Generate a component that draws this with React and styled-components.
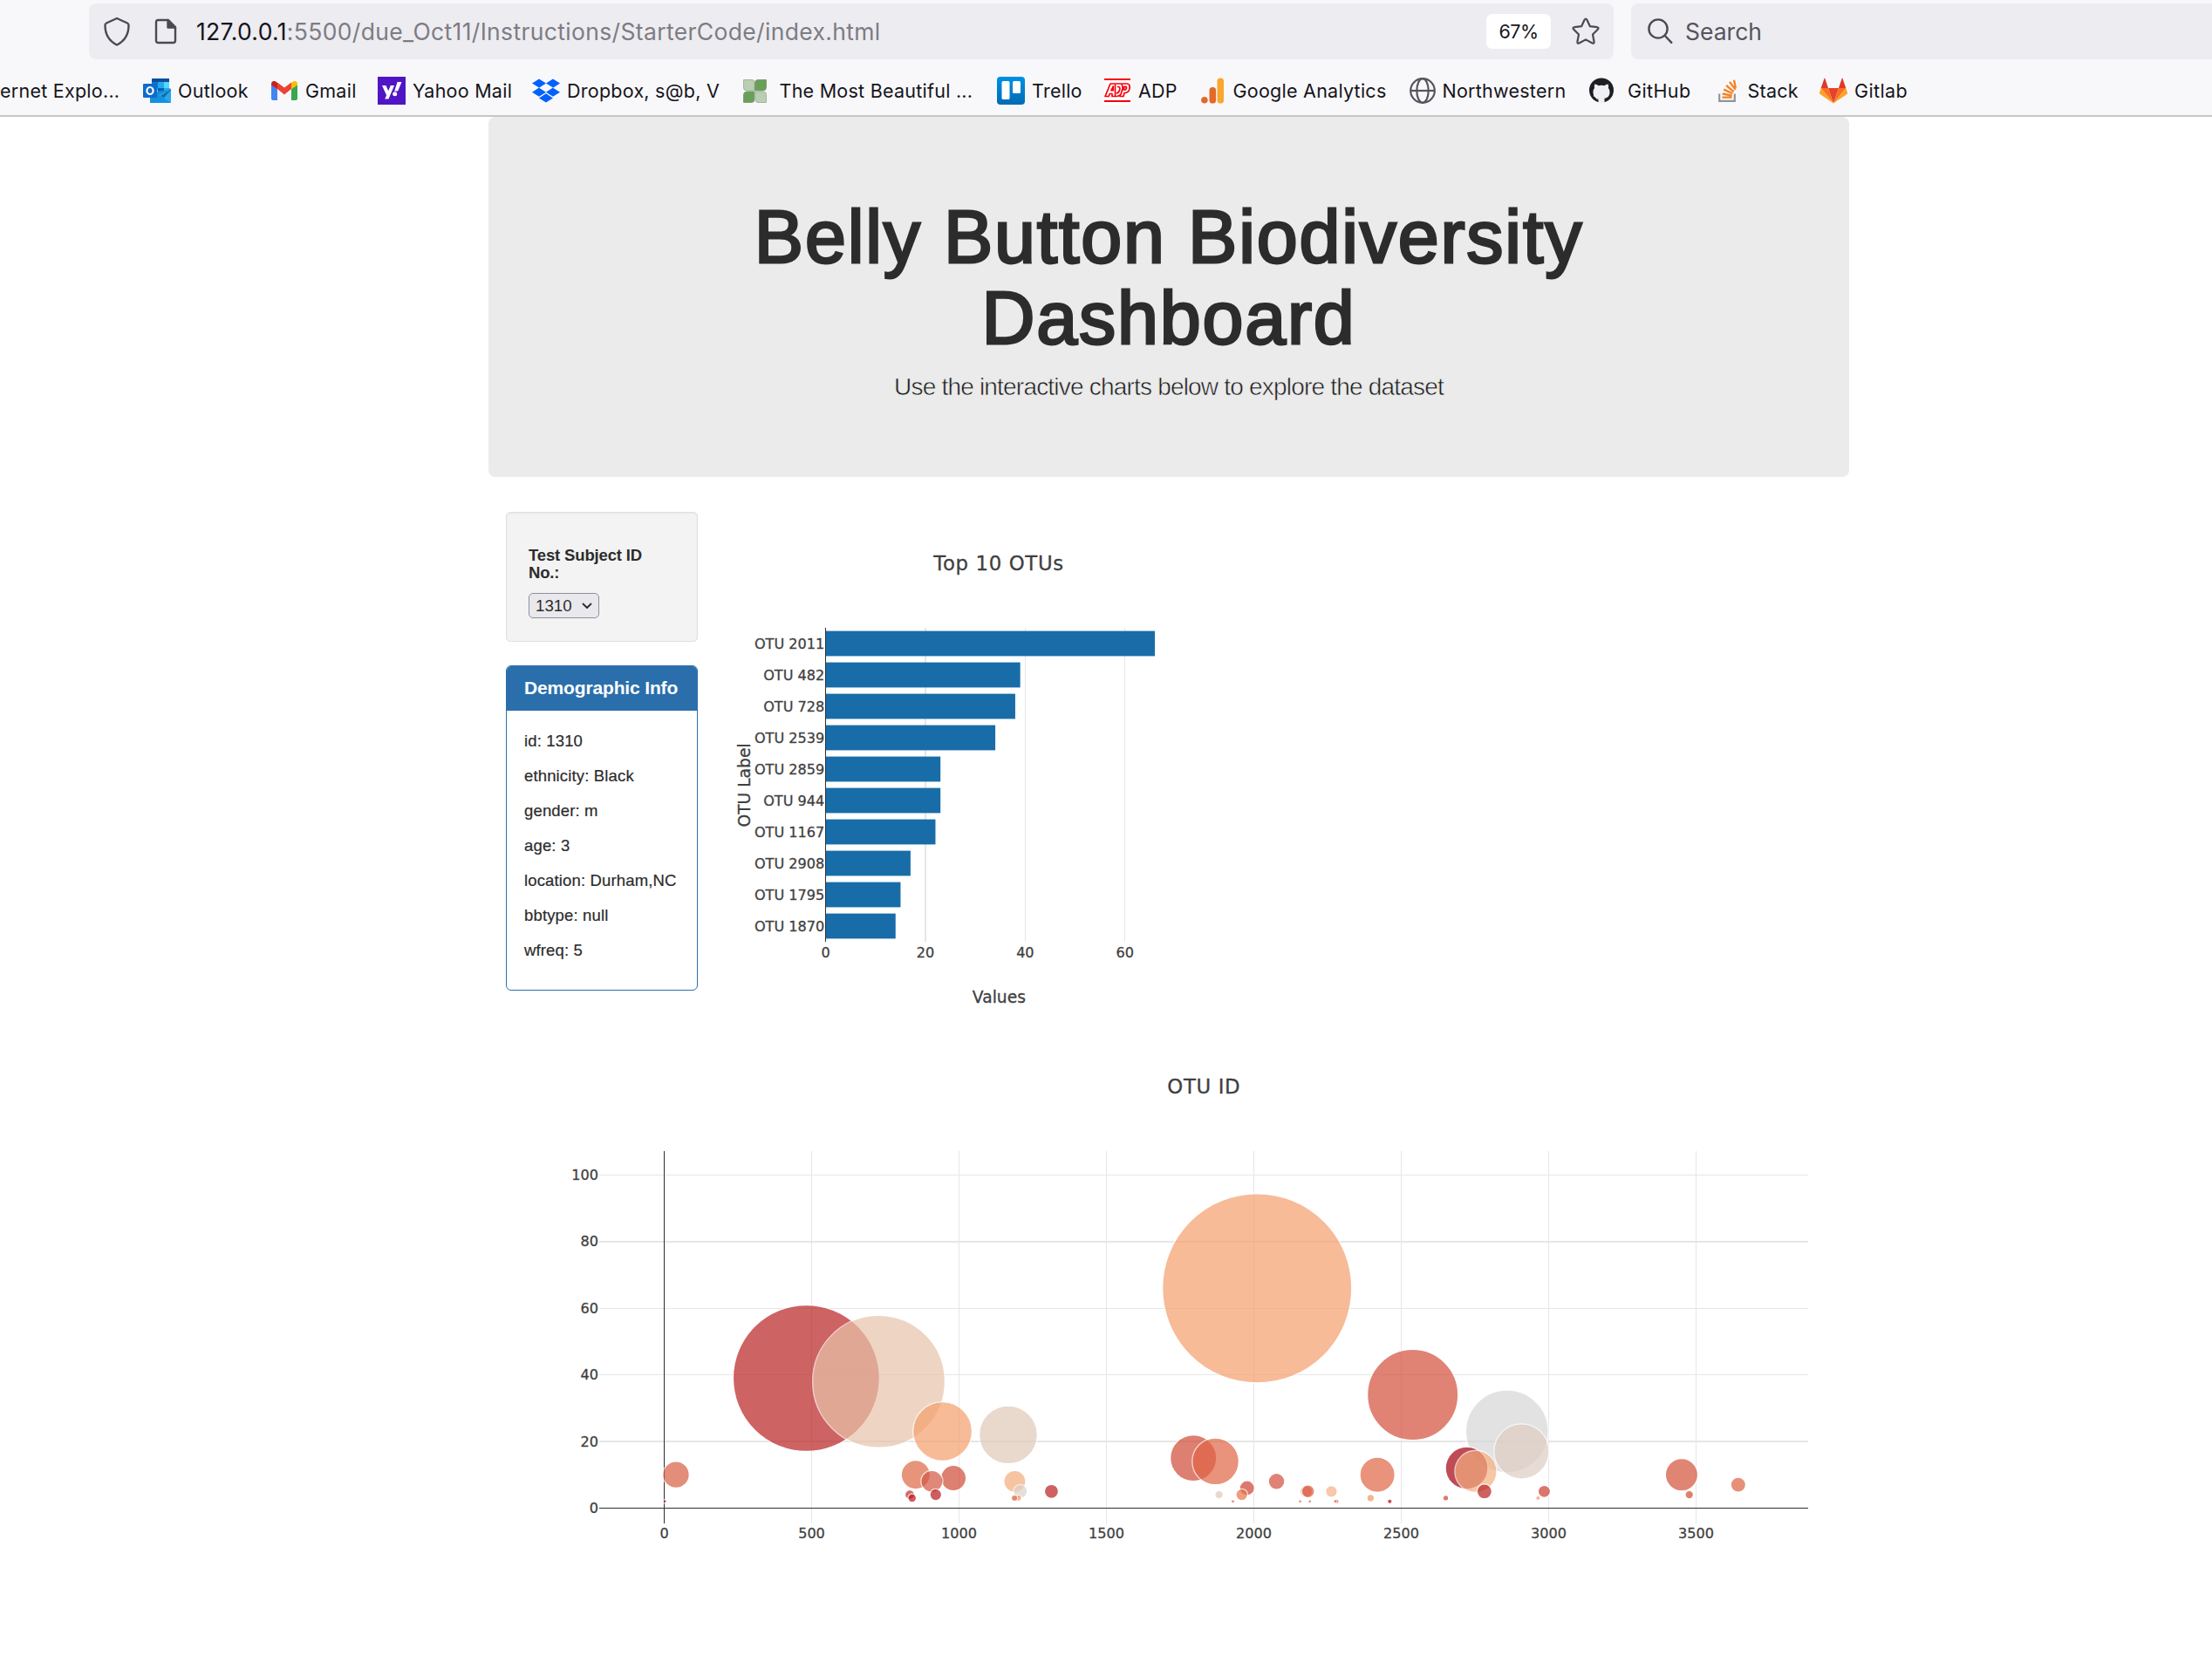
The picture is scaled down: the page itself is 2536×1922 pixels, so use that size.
import React from "react";
import styled, { createGlobalStyle } from "styled-components";
import { FaDropbox } from "react-icons/fa";

const ui = '"Inter", "Liberation Sans", sans-serif';
const helv = '"Liberation Sans", Arial, sans-serif';
const verdana = '"DejaVu Sans", Verdana, sans-serif';

const GlobalStyle = createGlobalStyle`
  * { box-sizing: border-box; }
  html, body { margin: 0; background: #fff; }
  body { width: 2536px; height: 1922px; overflow: hidden; font-family: ${helv}; color: #2c2c2c; }
`;

/* ---------- browser chrome ---------- */
const Chrome = styled.header`
  height: 134px;
  background: #f8f8fa;
  border-bottom: 2px solid #c6c6c7;
  font-family: ${ui};
  overflow: hidden;
`;
const Toolbar = styled.div`
  display: flex;
  gap: 20px;
  padding: 4px 0 0 102px;
`;
const Field = styled.div`
  display: flex;
  align-items: center;
  height: 64px;
  flex: none;
  background: #edecf1;
  border-radius: ${(p) => (p.$open ? "8px 0 0 8px" : "8px")};
  width: ${(p) => p.$w}px;
  padding-left: ${(p) => p.$pl}px;
`;
const FieldIcon = styled.svg`
  display: block;
  flex: none;
  fill: none;
  stroke: #4b4a52;
  stroke-linejoin: round;
  stroke-linecap: round;
  margin-left: ${(p) => p.$ml || 0}px;
  margin-right: ${(p) => p.$mr || 0}px;
`;
const Url = styled.div`
  flex: 1;
  margin-left: 22px;
  font-size: 26.5px;
  letter-spacing: 0.34px;
  color: #7d7c83;
  white-space: nowrap;
  b { font-weight: 400; color: #15141a; }
`;
const Zoom = styled.div`
  width: 74px;
  height: 40px;
  margin-right: 24px;
  border-radius: 7px;
  background: #fff;
  color: #15141a;
  font-size: 21.5px;
  letter-spacing: -0.5px;
  line-height: 41px;
  text-align: center;
`;
const Placeholder = styled.span`
  margin-left: 14px;
  font-size: 26.5px;
  color: #55545c;
`;
const Bookmarks = styled.nav`
  display: flex;
  height: 72px;
  align-items: center;
`;
const Bookmark = styled.a`
  display: flex;
  align-items: center;
  flex: 0 0 ${(p) => p.$w}px;
  height: 32px;
  font-size: 21.5px;
  letter-spacing: ${(p) => p.$ls || 0.25}px;
  color: #15141a;
  white-space: nowrap;
  svg { display: block; flex: none; margin-right: ${(p) => p.$gap}px; }
`;

const OutlookIcon = () => (
  <svg width="32" height="32" viewBox="0 0 32 32">
    <path d="M10 2h20v14H10z" fill="#28a8ea" />
    <path d="M10 2h20v4H10z" fill="#0a4f9e" />
    <path d="M10 6h7v7h-7z" fill="#0078d4" />
    <path d="M24 6h6v7h-6z" fill="#50d9ff" />
    <path d="M17 13h7v7h-7z" fill="#0364b8" />
    <path d="M8 18L32 15v15H8z" fill="#1490df" />
    <path d="M32 15v15L18 21z" fill="#28a8ea" />
    <path d="M16 20l8 4 8-9v-1l-2-1v3l-10 6z" fill="#0a3f7a" opacity=".6" />
    <rect x="0" y="8" width="16" height="16" rx="1" fill="#0f6cc9" />
    <ellipse cx="8" cy="16" rx="3.6" ry="4" fill="none" stroke="#fff" strokeWidth="2.2" />
  </svg>
);
const GmailIcon = () => (
  <svg width="30" height="22" viewBox="0 0 30 22">
    <path d="M0 4l7 5v13H2a2 2 0 0 1-2-2z" fill="#4285f4" />
    <path d="M30 4l-7 5v13h5a2 2 0 0 0 2-2z" fill="#34a853" />
    <path d="M7 9V1.5L15 7.5l8-6V9l-8 6.5z" fill="#ea4335" />
    <path d="M0 3.2C0 .4 3-.9 5.2.6L7 2v7.2L0 4.5z" fill="#c5221f" />
    <path d="M30 3.2C30 .4 27-.9 24.8.6L23 2v7.2l7-4.700z" fill="#fbbc04" />
  </svg>
);
const YahooIcon = () => (
  <svg width="32" height="32" viewBox="0 0 32 32">
    <path d="M0 0h32v32H0z" fill="#5015c4" />
    <path d="M5 10h4.500l2.700 6.300L14.800 10h4.300l-6.600 15.500H8.200l1.900-4.300z" fill="#fff" />
    <path d="M22.600 6h4.900l-4.300 10.500h-4z" fill="#fff" />
    <circle cx="19.700" cy="19.800" r="2.500" fill="#fff" />
  </svg>
);
const LeafIcon = () => (
  <svg width="27" height="27" viewBox="0 0 27 27">
    <path d="M.5.5H10a3 3 0 0 1 3 3V13H4a3.500 3.500 0 0 1-3.500-3.500z" fill="#b9ceb3" stroke="#a3b59f" />
    <path d="M26.500.5V9a4 4 0 0 1-4 4h-9V4a3.500 3.500 0 0 1 3.500-3.500z" fill="#68a057" stroke="#7f9f75" />
    <path d="M.5 26.500V18a4 4 0 0 1 4-4H13v9a3.500 3.500 0 0 1-3.500 3.500z" fill="#68a057" stroke="#7f9f75" />
    <path d="M14 14h9a3.500 3.500 0 0 1 3.500 3.500v9H17a3 3 0 0 1-3-3z" fill="#b9ceb3" stroke="#a3b59f" />
  </svg>
);
const TrelloIcon = () => (
  <svg width="32" height="32" viewBox="0 0 32 32">
    <defs>
      <linearGradient id="trello" x1="0" y1="0" x2="0" y2="1">
        <stop offset="0" stopColor="#0091e6" />
        <stop offset="1" stopColor="#006bb3" />
      </linearGradient>
    </defs>
    <rect width="32" height="32" rx="4" fill="url(#trello)" />
    <rect x="5.500" y="5" width="9" height="21" rx="1.500" fill="#fff" />
    <rect x="18" y="5" width="9" height="14" rx="1.500" fill="#fff" />
  </svg>
);
const AdpIcon = () => (
  <svg width="30" height="32" viewBox="0 0 30 32">
    <path d="M0 0h30v32H0z" fill="#fff" />
    <path d="M0 2h30v2H0zM0 27h30v2H0z" fill="#f5000f" />
    <g fill="none" stroke="#f5000f" strokeWidth="1.700" strokeLinejoin="round">
      <path d="M1 22.500L7 8h19.500q2.700.5 2.700 3.500 0 6-4.700 7h-1.500l-1 4h-4l.5-2q-2 2-4.500 2H9v-3H6.200l-1 3z" />
      <path d="M8 15.700L10.200 11v4.700z" />
      <path d="M12.500 8.500V22M14.800 11.500h1.500q2.200.5 1.400 3.500-.8 3.500-4 4" />
      <path d="M19.700 8.500q2 2 1.300 5l-2 7M23 11.300h2q1.300 2-.7 3.700h-2z" />
    </g>
  </svg>
);
const AnalyticsIcon = () => (
  <svg width="26" height="30" viewBox="0 0 26 30">
    <circle cx="3.900" cy="25.700" r="3.800" fill="#e2692a" />
    <rect x="9.500" y="11" width="7.600" height="18.500" rx="3.600" fill="#e2692a" />
    <rect x="18.500" y=".5" width="7.500" height="29" rx="3.600" fill="#f9a72e" />
  </svg>
);
const GlobeIcon = () => (
  <svg width="30" height="30" viewBox="0 0 30 30" fill="none" stroke="#56555f" strokeWidth="2.200">
    <circle cx="15" cy="15" r="13.800" />
    <ellipse cx="15" cy="15" rx="6.700" ry="13.800" />
    <path d="M1 15h28" />
  </svg>
);
const GithubIcon = () => (
  <svg width="28" height="30" viewBox="0 0 28 30">
    <circle cx="14" cy="14.500" r="14" fill="#1e2024" />
    <path d="M10.500 29.500v-5.800c-4-.5-6-3-6-7.200 0-2 .6-3.500 1.600-4.600-.4-1.700-.2-3.300.3-4.300 1.500 0 3 .8 4.100 1.600q3.500-.8 7 0c1.200-.8 2.600-1.600 4.100-1.600.5 1 .7 2.600.3 4.300 1 1.100 1.600 2.600 1.600 4.600 0 4.200-2 6.700-6 7.200v5.800z" fill="#f1f1f3" />
    <path d="M5 20.500q2 .5 3 2.500 1 1.700 3 1.200" fill="none" stroke="#f1f1f3" strokeWidth="1.400" />
  </svg>
);
const StackIcon = () => (
  <svg width="22" height="26" viewBox="0 0 22 26" fill="none">
    <path d="M1.200 16.500v8.300h17.600v-8.300" stroke="#8f959d" strokeWidth="2.200" />
    <g stroke="#f48024" strokeWidth="2.300">
      <path d="M4.500 20.700h11M4.700 16.500l10.900 2.200M6.300 11.600l10.100 4.700M9.100 7l8.600 7.200M13 2.900l6.700 9M18 .8l1.900 9" />
    </g>
  </svg>
);
const GitlabIcon = () => (
  <svg width="32" height="30" viewBox="0 0 32 30">
    <path d="M16 29.500L22 12H10z" fill="#e24329" />
    <path d="M16 29.500L10 12H1.700z" fill="#fc6d26" />
    <path d="M16 29.500L22 12h8.300z" fill="#fc6d26" />
    <path d="M1.700 12L0 17.500q-.1.900.6 1.500L16 29.500z" fill="#fca326" />
    <path d="M30.300 12l1.700 5.500q.1.900-.6 1.500L16 29.500z" fill="#fca326" />
    <path d="M1.700 12H10L6.300.8q-.3-.6-.7 0zM30.300 12H22L25.700.8q.3-.6.7 0z" fill="#e0382b" />
  </svg>
);
const bookmarks = [
  { label: "ernet Explo...", w: 164 },
  { label: "Outlook", w: 147, gap: 8, icon: <OutlookIcon /> },
  { label: "Gmail", w: 122, gap: 9, icon: <GmailIcon /> },
  { label: "Yahoo Mail", w: 177, gap: 8, icon: <YahooIcon /> },
  { label: "Dropbox, s@b, V", w: 241.5, gap: 8, icon: <FaDropbox size={32} color="#0061fe" /> },
  { label: "The Most Beautiful ...", w: 291.5, gap: 15, icon: <LeafIcon /> },
  { label: "Trello", w: 123, gap: 8, icon: <TrelloIcon /> },
  { label: "ADP", w: 111, gap: 9, icon: <AdpIcon /> },
  { label: "Google Analytics", w: 239, gap: 10.5, icon: <AnalyticsIcon /> },
  { label: "Northwestern", w: 205.5, gap: 7.5, icon: <GlobeIcon /> },
  { label: "GitHub", w: 148, gap: 16.5, ls: 0.4, icon: <GithubIcon /> },
  { label: "Stack", w: 116.5, gap: 12, icon: <StackIcon /> },
  { label: "Gitlab", w: 120, gap: 8, ls: 0.4, icon: <GitlabIcon /> },
];

/* ---------- page ---------- */
const Page = styled.main`
  width: 1560px;
  margin-left: 560px;
`;
const Jumbotron = styled.section`
  height: 413px;
  padding-top: 92px;
  border-radius: 8px;
  background: #ebebeb;
  text-align: center;
`;
const Title = styled.h1`
  margin: 0 auto;
  width: 1100px;
  font-weight: 400;
  font-size: 84.4px;
  line-height: 93px;
  letter-spacing: 1.8px;
  -webkit-text-stroke: 2.8px #2c2c2c;
`;
const Lead = styled.p`
  margin: 12px 0 0;
  color: #1c1c1c;
  font-size: 28px;
  line-height: 40px;
  letter-spacing: -0.8px;
  -webkit-text-stroke: 0.55px #ebebeb;
`;
const Row = styled.section`
  display: flex;
  margin-top: 40px;
  padding-left: 20px;
`;
const Side = styled.aside`
  width: 220px;
  margin-right: 30px;
`;
const Well = styled.div`
  height: 149px;
  padding: 39px 25px 0;
  border: 1px solid #e0e0e0;
  border-radius: 5px;
  background: #f3f3f3;
  box-shadow: inset 0 1px 2px rgba(0, 0, 0, 0.05);
`;
const WellLabel = styled.h5`
  margin: 0 0 13px;
  font-size: 18.5px;
  line-height: 20px;
  letter-spacing: -0.15px;
  font-weight: 700;
`;
const Select = styled.div`
  display: flex;
  align-items: center;
  justify-content: space-between;
  width: 81px;
  height: 29px;
  padding: 0 7px;
  border: 1px solid #8f8f9d;
  border-radius: 5px;
  background: #e9e9ed;
  font-size: 18.7px;
`;
const Panel = styled.div`
  height: 373px;
  margin-top: 27px;
  border: 1px solid #2a6fab;
  border-radius: 6px;
  overflow: hidden;
`;
const PanelHead = styled.h3`
  margin: 0;
  height: 51px;
  padding-left: 20px;
  background: #2a6fab;
  color: #fff;
  font-size: 21px;
  letter-spacing: -0.15px;
  line-height: 50px;
  font-weight: 700;
  white-space: nowrap;
`;
const Facts = styled.div`
  padding: 15px 0 0 20px;
  font-size: 18.5px;
  line-height: 40px;
  letter-spacing: 0.15px;
  -webkit-text-stroke: 0.2px #2c2c2c;
  white-space: nowrap;
`;
const Plot = styled.svg`
  display: block;
  font-family: ${verdana};
  fill: #3f3f3f;
  text { stroke: #3f3f3f; stroke-width: 0.3px; }
`;
const PlotTitle = styled.text`
  font-size: 22.8px;
  letter-spacing: 0.65px;
  text-anchor: middle;
`;
const AxisTitle = styled.text`
  font-size: 18.7px;
  text-anchor: middle;
`;
const Tick = styled.text`
  font-size: 16.1px;
  text-anchor: ${(p) => (p.$end ? "end" : "middle")};
`;
const Bubbles = styled.section`
  margin-left: 60px;
`;

const facts = ["id: 1310", "ethnicity: Black", "gender: m", "age: 3", "location: Durham,NC", "bbtype: null", "wfreq: 5"];
const bars = [
  ["OTU 2011", 66], ["OTU 482", 39], ["OTU 728", 38], ["OTU 2539", 34], ["OTU 2859", 23],
  ["OTU 944", 23], ["OTU 1167", 22], ["OTU 2908", 17], ["OTU 1795", 15], ["OTU 1870", 14],
];

function BarChart() {
  const x0 = 116.7;
  const unit = 5.717;
  const top = 133;
  return (
    <Plot width="540" height="600" viewBox="0 0 540 600">
      <PlotTitle x="315" y="67.200">Top 10 OTUs</PlotTitle>
      {[[20, 2], [40, 1], [60, 1]].map(([v, w]) => (
        <rect key={v} x={Math.round(x0 + v * unit - w / 2 - 0.3)} y={top} width={w} height="360" fill="#e6e6e6" />
      ))}
      {bars.map(([name, v], i) => (
        <g key={name}>
          <rect x={x0} y={top + i * 36 + 3.6} width={v * unit} height="28.800" fill="#186da8" />
          <Tick $end x="115.300" y={top + i * 36 + 23.6}>{name}</Tick>
        </g>
      ))}
      <rect x="116" y={top} width="1" height="360" fill="#2f2f2f" />
      {[0, 20, 40, 60].map((v) => (
        <Tick key={v} x={x0 + v * unit} y="510.700">{v}</Tick>
      ))}
      <AxisTitle transform="translate(30 313.500) rotate(-90)">OTU Label</AxisTitle>
      <AxisTitle x="315.400" y="562.700">Values</AxisTitle>
    </Plot>
  );
}

/* [otu id, sample value, radius, tint on white] */
const samples = [
  [2011, 66, 108, "f7bc99"], [482, 39, 83.4, "cf6464"], [728, 38, 75.3, "efd6c4"],
  [2539, 34, 51.5, "e08476"], [2859, 23, 46.8, "e2e2e2"], [944, 23, 33.3, "f7bc99"],
  [1167, 22, 32.8, "ead9cd"], [2908, 17, 31, "e8ddd6"], [1795, 15, 26, "de8072"],
  [1870, 14, 26.2, "e9937d"], [2722, 12, 23.8, "bf4556"], [2753, 11, 23.5, "f8c7a6"],
  [2419, 10, 19.5, "e9937d"], [3451, 10, 18, "e18674"], [40, 10, 14.7, "e48f7b"],
  [853, 10, 16, "e7957c"], [981, 9, 14, "de8072"], [908, 8, 12, "e08a7b"],
  [1189, 8, 12, "f7c5a3"], [2077, 8, 8.8, "e08477"], [3643, 7, 8, "e8917a"],
  [1977, 6, 8, "dd7a70"], [1313.5, 5, 7.5, "d06263"], [1208, 5, 7.4, "e8dfda"],
  [2782, 5, 8, "d06263"], [2178, 5, 6.5, "e9a08d"], [2184, 5, 6.8, "e58e7a"],
  [2263, 5, 6.2, "f8caab"], [2985, 5, 6.5, "dc776e"], [3477, 4, 4.2, "e4806c"],
  [833, 4, 5, "d56e6a"], [921, 4, 6.2, "cf5f62"], [1882, 4, 4.2, "ead9cd"],
  [1959, 4, 6.2, "ee9f80"], [841, 3, 4.3, "cf5f62"], [1201, 3, 3, "f6b48a"],
  [1188, 3, 3, "e48a76"], [2396, 3, 3.7, "f5b78f"], [2651, 3, 2.7, "de7a6e"],
  [2964, 3, 2, "f5b58f"], [2, 2, 1.5, "d95f63"], [1929, 2, 1.4, "e07f72"],
  [2157, 2, 1.3, "e8846c"], [2190, 2, 1.3, "e8846c"], [2281, 2, 2, "dc6a64"],
  [2276, 2, 1.5, "f0a080"], [2461, 2, 2.2, "cf5058"],
];
const channel = (hex, i) => Math.max(0, Math.round((parseInt(hex.slice(i, i + 2), 16) - 76.5) / 0.7));
const solid = (hex) => `rgb(${channel(hex, 0)}, ${channel(hex, 2)}, ${channel(hex, 4)})`;

function BubbleChart() {
  const sx = (v) => 141.5 + v * 0.338;
  const sy = (v) => 542.4 - v * 3.819;
  return (
    <Plot width="1500" height="640" viewBox="0 0 1500 640">
      <PlotTitle x="760.300" y="67">OTU ID</PlotTitle>
      {[500, 1000, 1500, 2000, 2500, 3000, 3500].map((v) => (
        <rect key={v} x={Math.round(sx(v) - 0.5)} y="133" width="1" height="427" fill="#e6e6e6" />
      ))}
      {[[20, 465, 2], [40, 389, 1], [60, 313, 1], [80, 236, 2], [100, 160, 1]].map(([v, y, h]) => (
        <rect key={v} x="67" y={y} width="1386" height={h} fill="#e6e6e6" />
      ))}
      <rect x="141" y="133" width="1" height="427" fill="#2f2f2f" />
      <rect x="67" y="542" width="1386" height="1" fill="#2f2f2f" />
      {samples.map(([id, v, r, tint]) => (
        <circle key={`${id}-${v}`} cx={sx(id)} cy={sy(v)} r={r + 0.6} fill={solid(tint)} stroke="#fff" strokeWidth="1.340" opacity="0.7" />
      ))}
      {[0, 20, 40, 60, 80, 100].map((v) => (
        <Tick $end key={v} x="66" y={sy(v) + 5.5}>{v}</Tick>
      ))}
      {[0, 500, 1000, 1500, 2000, 2500, 3000, 3500].map((v) => (
        <Tick key={v} x={sx(v)} y="576.500">{v}</Tick>
      ))}
    </Plot>
  );
}

export default function App() {
  return (
    <>
      <GlobalStyle />
      <Chrome>
        <Toolbar>
          <Field $w={1748} $pl={17}>
            <FieldIcon width="30" height="34" viewBox="0 0 30 34" strokeWidth="2.400">
              <path d="M15 2L27 7.500q1.500.7 1.500 2.500C28.500 20 24 28 15 32.500 6 28 1.500 20 1.500 10q0-1.800 1.500-2.500z" />
            </FieldIcon>
            <FieldIcon $ml={28} width="26" height="30" viewBox="0 0 26 30" strokeWidth="2.400">
              <path d="M4.500 2H16l8 8v15.500q0 2.500-2.500 2.500h-17Q2 28 2 25.500v-21Q2 2 4.500 2z" />
              <path d="M15.500 2v8.500H24z" fill="#4b4a52" />
            </FieldIcon>
            <Url><b>127.0.0.1</b>:5500/due_Oct11/Instructions/StarterCode/index.html</Url>
            <Zoom>67%</Zoom>
            <FieldIcon $mr={16} width="32" height="32" viewBox="0 0 32 32" strokeWidth="2.200">
              <path d="M14.700 2.500q1.300-2 2.600 0l3.600 7.700 8.200 1q2.300.5.900 2.300l-6 6 1.600 8.500q.1 2.300-2 1.500L16 25.400l-7.600 4.100q-2.100.8-2-1.500L8 19.500l-6-6q-1.400-1.800.9-2.300l8.200-1z" />
            </FieldIcon>
          </Field>
          <Field $w={666} $pl={19} $open>
            <FieldIcon width="29" height="30" viewBox="0 0 29 30" strokeWidth="2.400">
              <circle cx="12" cy="12" r="10.600" />
              <path d="M19.800 20l7.500 7.800" />
            </FieldIcon>
            <Placeholder>Search</Placeholder>
          </Field>
        </Toolbar>
        <Bookmarks>
          {bookmarks.map((b) => (
            <Bookmark key={b.label} $w={b.w} $gap={b.gap} $ls={b.ls}>{b.icon}{b.label}</Bookmark>
          ))}
        </Bookmarks>
      </Chrome>
      <Page>
        <Jumbotron>
          <Title>Belly Button Biodiversity Dashboard</Title>
          <Lead>Use the interactive charts below to explore the dataset</Lead>
        </Jumbotron>
        <Row>
          <Side>
            <Well>
              <WellLabel>Test Subject ID No.:</WellLabel>
              <Select>
                1310
                <svg width="12" height="8" viewBox="0 0 12 8" fill="none" stroke="#2c2c2c" strokeWidth="1.800" strokeLinecap="round" strokeLinejoin="round">
                  <path d="M1.500 1.500L6 6l4.500-4.500" />
                </svg>
              </Select>
            </Well>
            <Panel>
              <PanelHead>Demographic Info</PanelHead>
              <Facts>{facts.map((f) => <div key={f}>{f}</div>)}</Facts>
            </Panel>
          </Side>
          <BarChart />
        </Row>
        <Bubbles>
          <BubbleChart />
        </Bubbles>
      </Page>
    </>
  );
}
